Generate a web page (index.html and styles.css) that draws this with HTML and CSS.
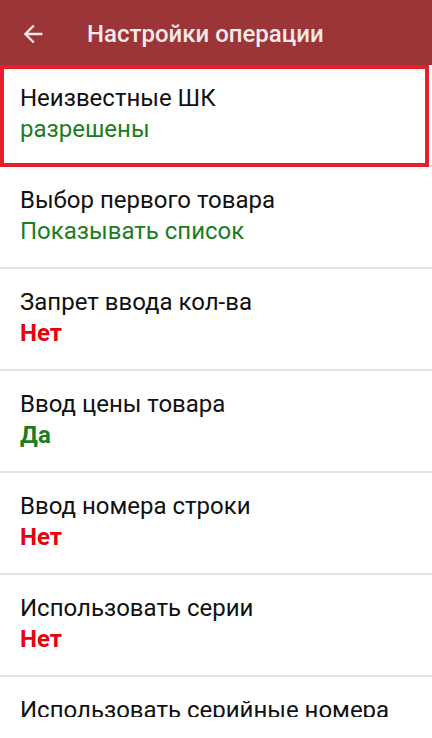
FILE: index.html
```html
<!DOCTYPE html>
<html lang="ru">

<head>
    <meta charset="utf-8">
    <meta name="viewport" content="width=device-width, initial-scale=1.0">
    <title>Настройки операции</title>
    <link rel="stylesheet" href="styles.css">
</head>

<body>
    <header class="app-bar">
        <svg class="back-icon" viewBox="0 0 24 24" width="28" height="28">
            <path d="M20 11H7.83l5.59-5.59L12 4l-8 8 8 8 1.41-1.41L7.83 13H20v-2z" />
        </svg>
        <h1 class="app-title">Настройки операции</h1>
    </header>

    <section class="settings">
        <div class="setting-item selected">
            <div class="setting-name">Неизвестные ШК</div>
            <div class="setting-value green">разрешены</div>
        </div>
        <div class="setting-item">
            <div class="setting-name">Выбор первого товара</div>
            <div class="setting-value green">Показывать список</div>
        </div>
        <div class="setting-item">
            <div class="setting-name">Запрет ввода кол-ва</div>
            <div class="setting-value red">Нет</div>
        </div>
        <div class="setting-item">
            <div class="setting-name">Ввод цены товара</div>
            <div class="setting-value green bold">Да</div>
        </div>
        <div class="setting-item">
            <div class="setting-name">Ввод номера строки</div>
            <div class="setting-value red">Нет</div>
        </div>
        <div class="setting-item">
            <div class="setting-name">Использовать серии</div>
            <div class="setting-value red">Нет</div>
        </div>
        <div class="setting-item">
            <div class="setting-name">Использовать серийные номера</div>
            <div class="setting-value red">Нет</div>
        </div>
    </section>
</body>

</html>
```

FILE: styles.css
```css
* {
    margin: 0;
    padding: 0;
    box-sizing: border-box;
}

body {
    background-color: #ffffff;
    font-family: Roboto, "Noto Sans", sans-serif;
    color: #111111;
    overflow: hidden;
}

.app-bar {
    display: flex;
    align-items: center;
    height: 65px;
    padding: 3px 0 0 19px;
    background-color: #9b3537;
}

.back-icon {
    fill: #f6e9e9;
    flex-shrink: 0;
}

.app-title {
    margin-left: 40px;
    font-size: 24px;
    font-weight: 500;
    color: #f6e9e9;
}

/* list is cut by the bottom of the screen */
.settings {
    height: 652px;
    overflow: hidden;
}

.setting-item {
    position: relative;
    padding: 18px 20px 20px;
    border-bottom: 2px solid #e3e3e3;
    font-size: 24px;
    line-height: 31px;
}

.setting-item.selected::after {
    content: "";
    position: absolute;
    top: 0;
    left: 0;
    right: 3px;
    bottom: -2px;
    border: 4px solid #e5202a;
}

.setting-value.green {
    color: #1b7d22;
}

.setting-value.red {
    color: #e8000e;
    font-weight: 700;
}

.setting-value.bold {
    font-weight: 700;
}
```
